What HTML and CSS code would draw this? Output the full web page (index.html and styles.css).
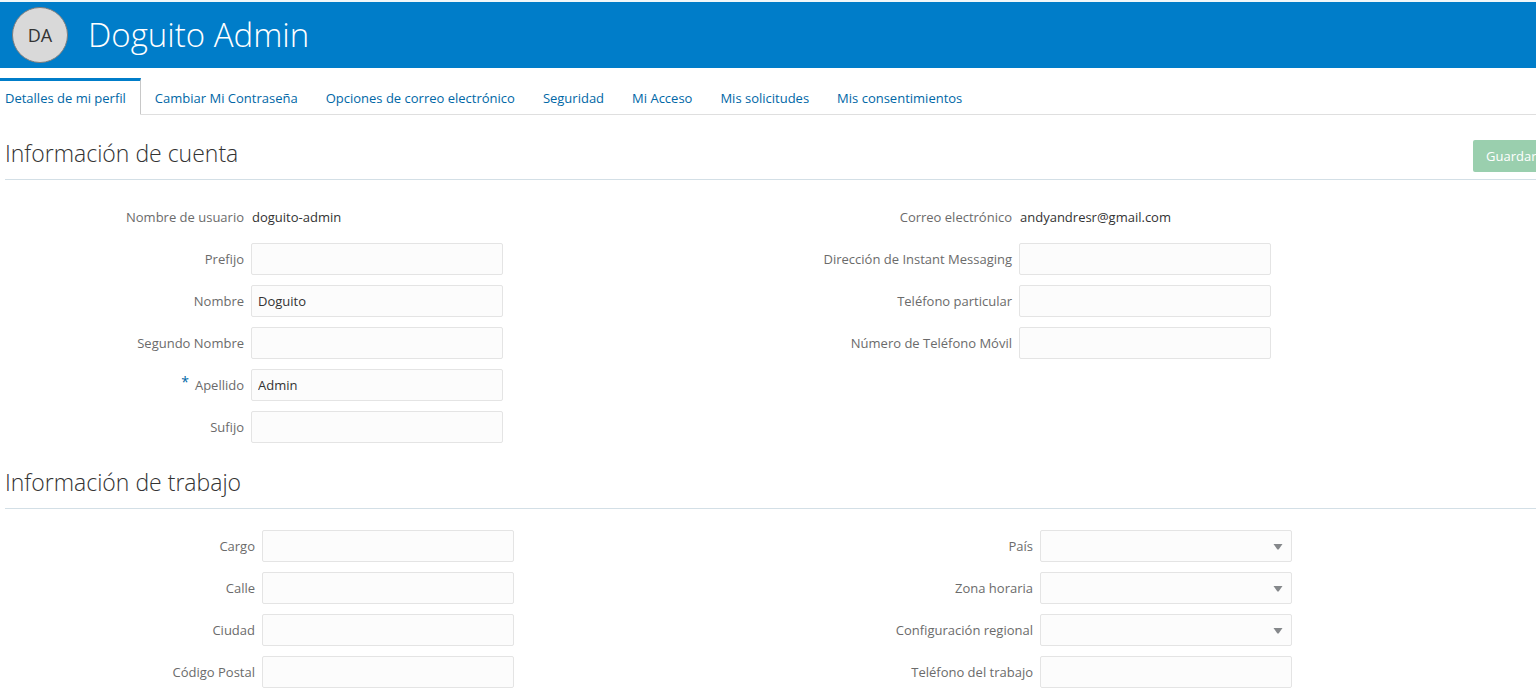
FILE: index.html
```html
<!DOCTYPE html>
<html lang="es">
<head>
<meta charset="utf-8">
<meta name="viewport" content="width=device-width, initial-scale=1">
<title>Doguito Admin</title>
<link rel="stylesheet" href="styles.css">
</head>
<body>
<header class="banner">
  <div class="avatar">DA</div>
  <h1 class="banner-name">Doguito Admin</h1>
</header>
<nav class="tabs">
  <a class="tab tab-active" href="#perfil" aria-current="page">Detalles de mi perfil</a>
  <a class="tab" href="#clave">Cambiar Mi Contraseña</a>
  <a class="tab" href="#correo">Opciones de correo electrónico</a>
  <a class="tab" href="#seguridad">Seguridad</a>
  <a class="tab" href="#acceso">Mi Acceso</a>
  <a class="tab" href="#solicitudes">Mis solicitudes</a>
  <a class="tab" href="#consentimientos">Mis consentimientos</a>
</nav>
<main>
  <section class="section">
    <div class="section-head">
      <h2 class="section-title">Información de cuenta</h2>
      <button class="save" type="button" disabled>Guardar</button>
    </div>
    <div class="columns account">
      <div class="fields">
        <span class="label">Nombre de usuario</span><span class="value">doguito-admin</span>
        <label class="label" for="prefijo">Prefijo</label><input class="control" id="prefijo" type="text">
        <label class="label" for="nombre">Nombre</label><input class="control" id="nombre" type="text" value="Doguito">
        <label class="label" for="segundo">Segundo Nombre</label><input class="control" id="segundo" type="text">
        <label class="label" for="apellido"><span class="required">*</span>Apellido</label><input class="control" id="apellido" type="text" value="Admin" required>
        <label class="label" for="sufijo">Sufijo</label><input class="control" id="sufijo" type="text">
      </div>
      <div class="fields">
        <span class="label">Correo electrónico</span><span class="value">andyandresr@gmail.com</span>
        <label class="label" for="im">Dirección de Instant Messaging</label><input class="control" id="im" type="text">
        <label class="label" for="particular">Teléfono particular</label><input class="control" id="particular" type="tel">
        <label class="label" for="movil">Número de Teléfono Móvil</label><input class="control" id="movil" type="tel">
      </div>
    </div>
  </section>
  <section class="section">
    <div class="section-head">
      <h2 class="section-title">Información de trabajo</h2>
    </div>
    <div class="columns work">
      <div class="fields">
        <label class="label" for="cargo">Cargo</label><input class="control" id="cargo" type="text">
        <label class="label" for="calle">Calle</label><input class="control" id="calle" type="text">
        <label class="label" for="ciudad">Ciudad</label><input class="control" id="ciudad" type="text">
        <label class="label" for="postal">Código Postal</label><input class="control" id="postal" type="text">
      </div>
      <div class="fields">
        <label class="label" for="pais">País</label>
        <div class="picker"><select class="control" id="pais"><option></option></select><svg class="arrow" viewBox="0 0 10 6" aria-hidden="true"><path d="M0.5 0h9L5.6 5.6h-1.2z"/></svg></div>
        <label class="label" for="zona">Zona horaria</label>
        <div class="picker"><select class="control" id="zona"><option></option></select><svg class="arrow" viewBox="0 0 10 6" aria-hidden="true"><path d="M0.5 0h9L5.6 5.6h-1.2z"/></svg></div>
        <label class="label" for="region">Configuración regional</label>
        <div class="picker"><select class="control" id="region"><option></option></select><svg class="arrow" viewBox="0 0 10 6" aria-hidden="true"><path d="M0.5 0h9L5.6 5.6h-1.2z"/></svg></div>
        <label class="label" for="trabajo">Teléfono del trabajo</label><input class="control" id="trabajo" type="tel">
      </div>
    </div>
  </section>
</main>
</body>
</html>
```

FILE: styles.css
```css
* {
  box-sizing: border-box;
}

body {
  margin: 0;
  overflow-x: hidden;
  background: #fff;
  color: #333;
  font: 13px/20px "Open Sans", "Noto Sans", sans-serif;
}

.banner {
  display: flex;
  align-items: center;
  gap: 20px;
  min-height: 68px;
  padding-left: 12px;
  border-top: 2px solid #f0f7f9;
  background: #007dc9;
}

.avatar {
  display: flex;
  align-items: center;
  justify-content: center;
  width: 56px;
  height: 56px;
  border: 1px solid #7d7d7d;
  border-radius: 50%;
  background: #d9d9d9;
  font-size: 18px;
}

.banner-name {
  margin: 0;
  color: #fff;
  font-size: 33px;
  font-weight: 300;
  line-height: 44px;
}

.tabs {
  display: flex;
  margin-top: 10px;
}

.tab {
  padding: 9px 14px 7px;
  border-top: 3px solid transparent;
  border-bottom: 1px solid #dfdfdf;
  color: #0067a6;
  line-height: 17px;
  text-decoration: none;
  white-space: nowrap;
}

.tab-active {
  padding-left: 5px;
  border-top-color: #007dc9;
  border-right: 1px solid #c8c8c8;
  border-bottom-color: transparent;
}

.tabs::after {
  flex: 1;
  border-bottom: 1px solid #dfdfdf;
  content: "";
}

.section {
  padding-top: 25px;
}

.section + .section {
  padding-top: 26px;
}

.section-head {
  display: flex;
  align-items: flex-start;
  justify-content: space-between;
  min-height: 40px;
  margin-left: 5px;
  border-bottom: 1px solid #d3dfe6;
}

.section-title {
  margin: 0;
  font-size: 23px;
  font-weight: 300;
  line-height: 27px;
}

.save {
  flex: none;
  width: 76px;
  height: 32px;
  margin-right: -13px;
  padding: 0 13px;
  border: 0;
  border-radius: 2px;
  background: #9acfae;
  color: #fff;
  font: inherit;
  text-align: left;
}

.columns {
  display: grid;
  padding-top: 21px;
}

.account {
  grid-template-columns: 1fr 1fr;
}

.work {
  grid-template-columns: 778fr 758fr;
}

.fields {
  display: grid;
  grid-template-columns: 244px 252px;
  grid-auto-rows: 32px;
  align-content: start;
  align-items: center;
  gap: 10px 7px;
}

.work .fields {
  grid-template-columns: 255px 252px;
}

.label {
  color: #6b6b6b;
  text-align: right;
  white-space: nowrap;
}

.value {
  padding-left: 1px;
}

.required {
  margin-right: 6px;
  color: #0067a6;
  font-size: 14px;
  line-height: 1;
  vertical-align: 3px;
}

.control {
  width: 100%;
  height: 32px;
  padding: 0 6px;
  border: 1px solid #e4e4e4;
  border-radius: 2px;
  background: #fcfcfc;
  color: #333;
  font: inherit;
  appearance: none;
}

.picker {
  position: relative;
}

.picker .control {
  display: block;
}

.arrow {
  position: absolute;
  top: 14px;
  right: 9px;
  width: 10px;
  height: 6px;
  fill: #85888b;
  pointer-events: none;
}
```
